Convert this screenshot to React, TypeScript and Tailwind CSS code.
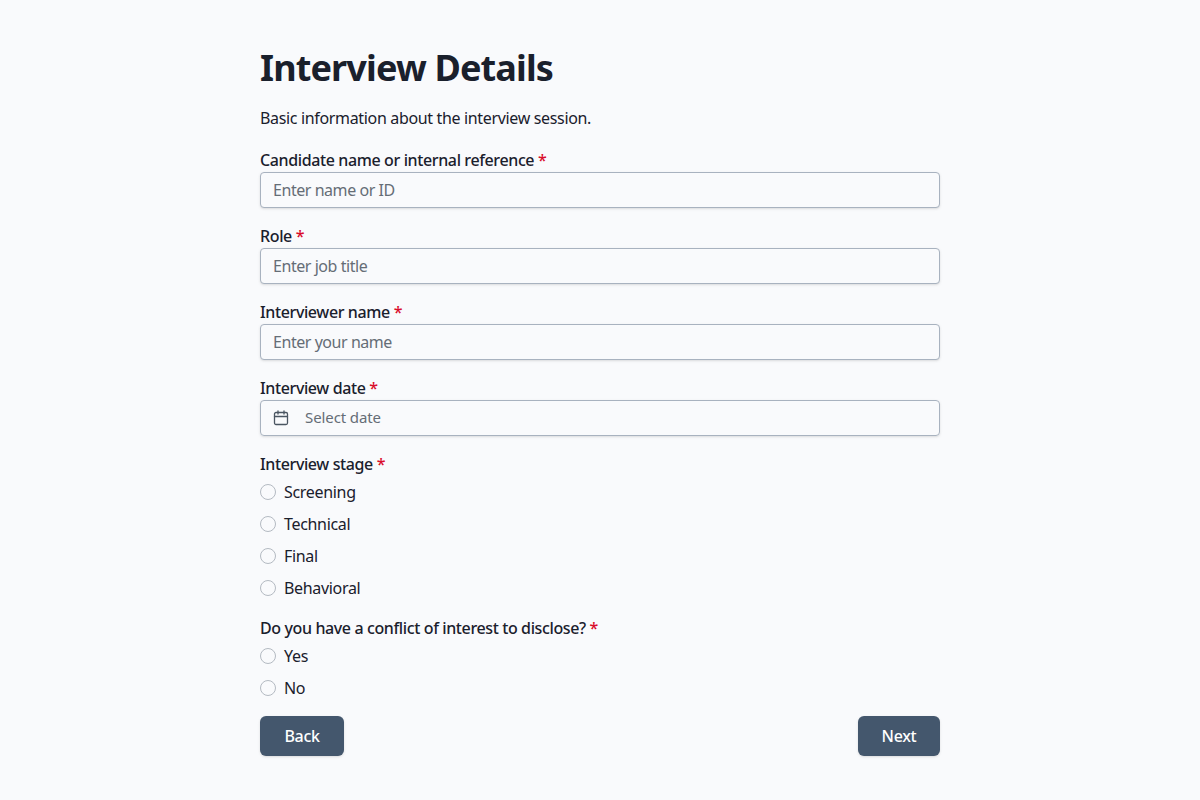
import React from 'react';

const font = "font-['Noto_Sans','Liberation_Sans',sans-serif]";

function Label({ text }: { text: string }) {
  return (
    <div className="h-6 text-[16px] leading-6 font-medium tracking-[-0.38px] text-[#1a202c]">
      {text} <span className="text-[#d90d2b]">*</span>
    </div>
  );
}

function TextField({ label, placeholder }: { label: string; placeholder: string }) {
  return (
    <div className="flex flex-col">
      <Label text={label} />
      <input
        placeholder={placeholder}
        className="h-9 w-full rounded border border-[#a8b2bf] bg-[#f9fafc] px-3 text-[16px] tracking-[-0.45px] text-[#1a202c] shadow-sm outline-none placeholder:text-[#656d76]"
      />
    </div>
  );
}

function RadioRow({ name, value }: { name: string; value: string }) {
  return (
    <label className="flex h-6 items-center gap-2 text-[16px] tracking-[-0.32px] text-[#1a202c]">
      <input
        type="radio"
        name={name}
        className="h-4 w-4 appearance-none rounded-full border border-[#b4bac2] bg-[#f9fafc]"
      />
      {value}
    </label>
  );
}

export default function App() {
  return (
    <div className={`min-h-screen bg-[#f9fafc] ${font}`}>
      <div className="mx-auto flex w-[680px] flex-col pt-12">
        <h1 className="text-[36px] leading-10 font-bold tracking-[-0.85px] text-[#1a202c]">Interview Details</h1>
        <p className="mt-[18px] text-[16px] leading-6 tracking-[-0.34px] text-[#1a202c]">Basic information about the interview session.</p>

        <div className="mt-[18px] flex flex-col gap-4">
          <TextField label="Candidate name or internal reference" placeholder="Enter name or ID" />
          <TextField label="Role" placeholder="Enter job title" />
          <TextField label="Interviewer name" placeholder="Enter your name" />

          <div className="flex flex-col">
            <Label text="Interview date" />
            <div className="flex h-9 items-center gap-4 rounded border border-[#a8b2bf] px-3 shadow-sm">
              <svg width="16" height="16" viewBox="0 0 16 16" fill="none" stroke="#4a5561" strokeWidth="1.3" strokeLinecap="round">
                <rect x="1.5" y="2.5" width="13" height="12" rx="1.5" />
                <path d="M1.5 6.5h13M5 1v3M11 1v3" />
              </svg>
              <span className="pb-0.5 text-[15px] tracking-[-0.1px] text-[#656d76]">Select date</span>
            </div>
          </div>

          <div className="flex flex-col gap-1">
            <Label text="Interview stage" />
            <div className="flex flex-col gap-2">
              {['Screening', 'Technical', 'Final', 'Behavioral'].map((s) => (
                <RadioRow key={s} name="stage" value={s} />
              ))}
            </div>
          </div>

          <div className="flex flex-col gap-1">
            <Label text="Do you have a conflict of interest to disclose?" />
            <div className="flex flex-col gap-2">
              {['Yes', 'No'].map((s) => (
                <RadioRow key={s} name="conflict" value={s} />
              ))}
            </div>
          </div>

          <div className="flex justify-between">
            <button className="h-10 w-[84px] rounded-md bg-[#44576d] text-[16px] font-medium tracking-[-0.3px] text-white shadow-sm">Back</button>
            <button className="h-10 w-[82px] rounded-md bg-[#44576d] text-[16px] font-medium tracking-[-0.3px] text-white shadow-sm">Next</button>
          </div>
        </div>
      </div>
    </div>
  );
}
